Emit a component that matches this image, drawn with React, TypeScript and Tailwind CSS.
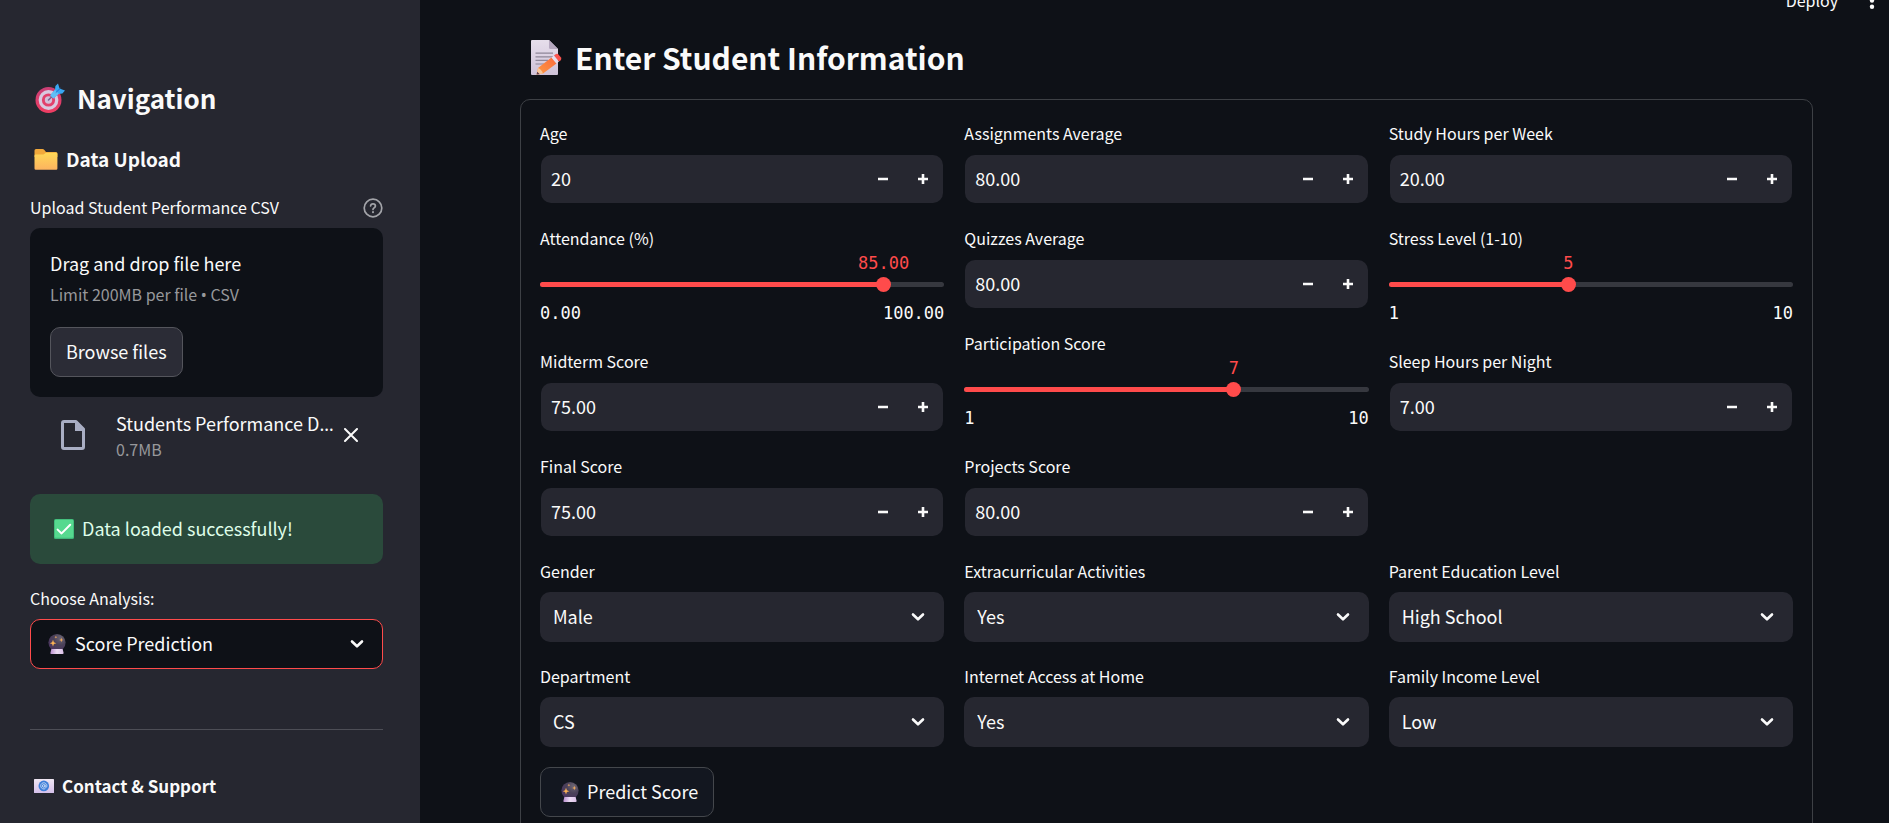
import { useId, useState } from "react";
import type { ReactNode } from "react";

function TargetEmoji({ className }: { className: string }) {
  return (
    <svg viewBox="0 0 30 30" className={className} aria-hidden="true">
      <defs>
        <linearGradient id="tg" x1="0" y1="0" x2="0" y2="1">
          <stop offset="0" stopColor="#c93f76" />
          <stop offset="1" stopColor="#f03d62" />
        </linearGradient>
      </defs>
      <circle cx="13.5" cy="17" r="13" fill="url(#tg)" />
      <circle cx="13.5" cy="17" r="9.9" fill="#d9c9df" />
      <circle cx="13.5" cy="17" r="6.6" fill="#e2406b" />
      <circle cx="13.5" cy="17" r="3.7" fill="#d3bfd8" />
      <path d="M13.5 17 20 10.5" stroke="#7a6390" strokeWidth="1.6" strokeLinecap="round" />
      <path d="M15.2 12.2 20 6.8 20.4 3 23 .6 24.6 5.6 30 7.6 27.4 10.6 23.6 11 18.4 15.4Z" fill="#38a6f2" />
      <path d="M15.2 12.2 20 6.8 23.8 10.8 18.4 15.4Z" fill="#5fc0f5" />
      <path d="M20.8 9.6 25.4 5.2" stroke="#1f6fd0" strokeWidth="1" />
    </svg>
  );
}

function FolderEmoji({ className }: { className: string }) {
  return (
    <svg viewBox="0 0 24 21" className={className} aria-hidden="true">
      <defs>
        <linearGradient id="fd" x1="0" y1="0" x2="0" y2="1">
          <stop offset="0" stopColor="#ffd857" />
          <stop offset="1" stopColor="#fcb35f" />
        </linearGradient>
      </defs>
      <path d="M.5 1.5Q.5 0 2 0H8.5Q9.6 0 10.4 1L12 3H22Q23.4 3 23.4 4.5V8H.5Z" fill="#f2a93b" />
      <path d="M.5 6.8Q.5 5.6 1.8 5.6H9.5L12 3.8H22.2Q23.4 3.8 23.4 5V19.4Q23.4 20.7 22.2 20.7H1.8Q.5 20.7.5 19.4Z" fill="url(#fd)" />
    </svg>
  );
}

function MemoEmoji({ className }: { className: string }) {
  return (
    <svg viewBox="0 0 31 35" className={className} aria-hidden="true">
      <defs>
        <linearGradient id="mp" x1="0" y1="0" x2="0" y2="1">
          <stop offset="0" stopColor="#e6deeb" />
          <stop offset="1" stopColor="#cfc2d8" />
        </linearGradient>
        <linearGradient id="mc" x1="1" y1="0" x2="0" y2="1">
          <stop offset="0" stopColor="#fb6a3c" />
          <stop offset="1" stopColor="#fb9a44" />
        </linearGradient>
      </defs>
      <path d="M0 1Q0 0 1 0H18L27 9V34Q27 35 26 35H1Q0 35 0 34Z" fill="url(#mp)" />
      <path d="M18 0 27 9H19.5Q18 9 18 7.5Z" fill="#b5a8bf" />
      <path d="M4.5 13.2H22M4.5 16.8H22M4.5 20.4H17M4.5 24H13" stroke="#8e8698" strokeWidth="1.2" />
      <path d="M5.6 34.6 7 28 20.5 17.5 25.5 23.5 12 33.6Z" fill="url(#mc)" />
      <path d="M5.6 34.6 7 28Q10.4 29 12 33.6Z" fill="#f7c79a" />
      <path d="M5.6 34.6 6.2 31.8 8.8 34.2Z" fill="#5d3748" />
      <path d="M20.5 17.5 23 15.6 28 21.6 25.5 23.5Z" fill="#e6dcea" />
      <path d="M23 15.6 25 14.1Q26.4 13.2 27.5 14.5L30 17.6Q30.8 19 29.8 20.2L28 21.6Z" fill="#f9544f" />
    </svg>
  );
}

function CheckEmoji({ className }: { className: string }) {
  return (
    <svg viewBox="0 0 20 20" className={className} aria-hidden="true">
      <rect width="20" height="20" rx="1.6" fill="#3fb779" />
      <rect x=".8" y=".8" width="18.4" height="18" rx="1.2" fill="#56d98f" />
      <path d="M3.6 10.6 7.6 14.4 16.2 5.8" fill="none" stroke="#fff" strokeWidth="2" strokeLinecap="round" strokeLinejoin="round" />
    </svg>
  );
}

function CrystalBallEmoji({ className }: { className: string }) {
  return (
    <svg viewBox="0 0 18 20" className={className} aria-hidden="true">
      <defs>
        <radialGradient id="cb" cx=".7" cy=".25" r=".8">
          <stop offset="0" stopColor="#6c6674" />
          <stop offset=".5" stopColor="#4a4158" />
          <stop offset="1" stopColor="#4b3560" />
        </radialGradient>
        <linearGradient id="cs" x1="0" y1="0" x2="1" y2="0">
          <stop offset="0" stopColor="#b98fd0" />
          <stop offset=".5" stopColor="#ecdcf3" />
          <stop offset="1" stopColor="#d9bfe6" />
        </linearGradient>
      </defs>
      <circle cx="9" cy="8.6" r="8.6" fill="url(#cb)" />
      <path d="M3.4 15H14.6L15.6 19Q15.6 20 14.6 20H3.2Q2.2 20 2.4 19Z" fill="url(#cs)" />
      <path d="M5 5.8 5.9 8.3 8.4 9.2 5.9 10.1 5 12.6 4.1 10.1 1.8 9.2 4.1 8.3Z" fill="#fbb254" />
      <path d="M13.3 3.7 13.9 5.4 15.5 6 13.9 6.6 13.3 8.3 12.7 6.6 11.1 6 12.7 5.4Z" fill="#f5ac5c" />
      <path d="M7.9 1.8 8.3 2.8 9.3 3.2 8.3 3.6 7.9 4.6 7.5 3.6 6.5 3.2 7.5 2.8Z" fill="#f5ac5c" />
    </svg>
  );
}

function EmailEmoji({ className }: { className: string }) {
  return (
    <svg viewBox="0 0 20 14" className={className} aria-hidden="true">
      <defs>
        <linearGradient id="em" x1="0" y1="0" x2="0" y2="1">
          <stop offset="0" stopColor="#efe6f2" />
          <stop offset="1" stopColor="#d5c0ea" />
        </linearGradient>
      </defs>
      <rect width="20" height="14" rx=".6" fill="url(#em)" />
      <circle cx="9.8" cy="6.9" r="5.3" fill="#3f7fd9" />
      <circle cx="9.7" cy="6.9" r="1.3" fill="none" stroke="#d7e4f8" strokeWidth=".9" />
      <path d="M11.1 5.5V7.5Q11.2 8.6 12.1 8.4 13 8 12.9 6.8A3.1 3.1 0 1 0 11.3 9.6" fill="none" stroke="#d7e4f8" strokeWidth=".8" />
    </svg>
  );
}

function Chevron() {
  return (
    <svg
      viewBox="0 0 14 9"
      className="pointer-events-none absolute top-1/2 right-[19px] h-[9px] w-[14px] -translate-y-1/2"
      aria-hidden="true"
    >
      <path d="M2 2 7 6.8 12 2" fill="none" stroke="#fafafa" strokeWidth="2.6" strokeLinecap="round" strokeLinejoin="round" />
    </svg>
  );
}

const labelClass = "flex h-[30px] items-center pb-0.5 text-base leading-6 mb-[5px]";

function NumberField({ label, initial, decimals = 2 }: { label: string; initial: number; decimals?: number }) {
  const id = useId();
  const [value, setValue] = useState(initial.toFixed(decimals));
  const step = (delta: number) => setValue((v) => (Number(v) + delta).toFixed(decimals));
  return (
    <div>
      <label htmlFor={id} className={labelClass}>
        {label}
      </label>
      <div className="p-px">
        <div className="flex h-12 overflow-hidden rounded-[10px] bg-[#262730]">
          <input
            id={id}
            type="number"
            value={value}
            onChange={(e) => setValue(e.target.value)}
            className="min-w-0 flex-1 bg-transparent pb-0.5 pl-[10px] text-lg leading-6 outline-none [appearance:textfield] [&::-webkit-inner-spin-button]:appearance-none"
          />
          <button type="button" aria-label={`Decrease ${label}`} onClick={() => step(-1)} className="flex w-10 items-center justify-center">
            <svg viewBox="0 0 10 10" className="size-[10px]" aria-hidden="true">
              <path d="M0 5H10" stroke="#fafafa" strokeWidth="2.6" />
            </svg>
          </button>
          <button type="button" aria-label={`Increase ${label}`} onClick={() => step(1)} className="flex w-10 items-center justify-center">
            <svg viewBox="0 0 10 10" className="size-[10px]" aria-hidden="true">
              <path d="M0 5H10M5 0V10" stroke="#fafafa" strokeWidth="2.6" />
            </svg>
          </button>
        </div>
      </div>
    </div>
  );
}

function SliderField({
  label,
  min,
  max,
  initial,
  decimals = 0,
}: {
  label: string;
  min: number;
  max: number;
  initial: number;
  decimals?: number;
}) {
  const id = useId();
  const [value, setValue] = useState(initial);
  const percent = ((value - min) / (max - min)) * 100;
  return (
    <div>
      <label htmlFor={id} className={labelClass}>
        {label}
      </label>
      <div className="flex h-[68px] flex-col">
        <div className="relative mt-[15px] h-5">
          <div className="absolute inset-x-0 top-[8px] h-[5px] overflow-hidden rounded-full bg-[#36383f]">
            <div className="h-full bg-[#ff4b4b]" style={{ width: `${percent}%` }} />
          </div>
          <input
            id={id}
            type="range"
            min={min}
            max={max}
            value={value}
            onChange={(e) => setValue(Number(e.target.value))}
            className="absolute -left-[7px] top-0 h-5 w-[calc(100%+14px)] appearance-none bg-transparent outline-none [&::-webkit-slider-thumb]:size-[15px] [&::-webkit-slider-thumb]:appearance-none [&::-webkit-slider-thumb]:rounded-full [&::-webkit-slider-thumb]:bg-[#ff4b4b]"
          />
          <output
            htmlFor={id}
            className="absolute -top-[23px] -translate-x-1/2 font-['DejaVu_Sans_Mono',monospace] text-[17px] leading-6 text-[#ff4b4b]"
            style={{ left: `${percent}%` }}
          >
            {value.toFixed(decimals)}
          </output>
        </div>
        <div className="mt-[7px] flex justify-between font-['DejaVu_Sans_Mono',monospace] text-[17px] leading-6">
          <span>{min.toFixed(decimals)}</span>
          <span>{max.toFixed(decimals)}</span>
        </div>
      </div>
    </div>
  );
}

function SelectField({ label, options }: { label: string; options: string[] }) {
  const id = useId();
  return (
    <div>
      <label htmlFor={id} className={labelClass}>
        {label}
      </label>
      <div className="relative">
        <select id={id} className="h-[50px] w-full appearance-none rounded-[10px] bg-[#262730] px-[13px] pb-0.5 text-lg leading-6 outline-none">
          {options.map((o) => (
            <option key={o}>{o}</option>
          ))}
        </select>
        <Chevron />
      </div>
    </div>
  );
}

function Column({ children }: { children: ReactNode }) {
  return <div className="flex min-w-0 flex-1 flex-col gap-5">{children}</div>;
}

function Sidebar() {
  return (
    <aside className="flex w-[420px] shrink-0 flex-col overflow-hidden bg-[#262730] pr-[37px] pl-[30px]">
      <h2 className="mt-[74px] flex h-12 items-center text-[26px] leading-9 font-bold">
        <TargetEmoji className="mr-3 ml-[5px] size-[30px]" />
        Navigation
      </h2>
      <h3 className="mt-[23px] flex h-7 items-center text-[19px] leading-7 font-bold">
        <FolderEmoji className="mr-2 ml-1 h-[21px] w-6" />
        Data Upload
      </h3>

      <div className="mt-5 flex h-[30px] items-center justify-between">
        <label htmlFor="csv" className="pb-0.5 text-base leading-6">
          Upload Student Performance CSV
        </label>
        <button type="button" aria-label="Help">
          <svg viewBox="0 0 20 20" className="size-5" fill="none" stroke="#a3a4a9" strokeWidth="1.7" strokeLinecap="round" aria-hidden="true">
            <circle cx="10" cy="10" r="8.8" />
            <path d="M7.6 8Q7.7 5.8 10 5.8 12.4 5.8 12.4 8 12.4 9.2 11 9.9 10 10.4 10 11.4" />
            <path d="M10 14.1V14.2" strokeWidth="2" />
          </svg>
        </button>
      </div>
      <section className="mt-[5px] rounded-[10px] bg-[#0e1117] p-5">
        <input id="csv" type="file" accept=".csv" className="sr-only" />
        <p className="text-lg leading-[30px]">Drag and drop file here</p>
        <p className="text-base leading-8 text-[#97989b]">
          Limit 200MB per file <span className="font-['Noto_Sans',sans-serif] leading-none">•</span> CSV
        </p>
        <button type="button" className="mt-[17px] h-[50px] rounded-[10px] border border-[#54555c] bg-[#2b2c36] px-[15px] pb-0.5 text-lg leading-6">
          Browse files
        </button>
      </section>

      <div className="mt-3 flex items-center">
        <svg viewBox="0 0 24 30" className="ml-[31px] h-[30px] w-6 shrink-0" aria-hidden="true">
          <path d="M3 1.5H15L22.5 9V27Q22.5 28.5 21 28.5H3Q1.5 28.5 1.5 27V3Q1.5 1.5 3 1.5Z" fill="none" stroke="#a9aec4" strokeWidth="3" strokeLinejoin="round" />
          <path d="M14 1V11H23Z" fill="#a9aec4" />
        </svg>
        <div className="ml-[31px] w-[222px]">
          <p className="text-lg leading-7 whitespace-nowrap">
            Students Performance D<span className="font-['Noto_Sans',sans-serif] leading-none">…</span>
          </p>
          <p className="text-base leading-6 text-[#97989b]">0.7MB</p>
        </div>
        <button type="button" aria-label="Remove file" className="ml-[6px] shrink-0">
          <svg viewBox="0 0 14 14" className="size-[14px]" aria-hidden="true">
            <path d="M1 1 13 13M13 1 1 13" stroke="#fafafa" strokeWidth="2" strokeLinecap="round" />
          </svg>
        </button>
      </div>

      <div role="status" className="mt-[33px] flex h-[70px] items-center rounded-[10px] bg-[#2a4a3b] px-6 text-lg leading-7 text-[#dffde9]">
        <CheckEmoji className="mr-2 size-5" />
        <span className="pb-0.5">Data loaded successfully!</span>
      </div>

      <label htmlFor="analysis" className="mt-5 mb-[5px] flex h-[30px] items-center pb-0.5 text-base leading-6">
        Choose Analysis:
      </label>
      <div className="relative">
        <select
          id="analysis"
          className="h-[50px] w-full appearance-none rounded-[10px] border border-[#ff4b4b] bg-[#0e1117] px-11 pb-0.5 text-lg leading-6 outline-none"
        >
          <option>Score Prediction</option>
        </select>
        <CrystalBallEmoji className="pointer-events-none absolute top-[15px] left-[18px] h-5 w-[18px]" />
        <Chevron />
      </div>

      <hr className="mt-[60px] border-[#4d4e56]" />
      <h4 className="mt-[42px] flex h-7 items-center text-[17px] leading-7 font-bold">
        <EmailEmoji className="mr-2 ml-1 h-[14px] w-5" />
        Contact &amp; Support
      </h4>
    </aside>
  );
}

export default function App() {
  return (
    <div className="flex h-screen overflow-hidden bg-[#0e1117] font-['Noto_Sans_CJK_SC',sans-serif] text-[#fafafa]">
      <Sidebar />
      <main className="min-w-0 flex-1 overflow-y-auto [scrollbar-width:none]">
        <header className="-mt-3 flex h-6 items-center justify-end pr-[14px]">
          <button type="button" className="mr-[31px] text-base leading-6">
            Deploy
          </button>
          <button type="button" aria-label="Menu">
            <svg viewBox="0 0 6 20" className="h-5 w-[6px]" fill="#fafafa" aria-hidden="true">
              <circle cx="3" cy="4.5" r="2.2" />
              <circle cx="3" cy="10.5" r="2.2" />
              <circle cx="3" cy="16.7" r="2.2" />
            </svg>
          </button>
        </header>
        <div className="pr-[76px] pb-24 pl-[100px]">
          <h1 className="mt-[21px] flex h-12 items-center text-[30px] leading-[48px] font-bold">
            <MemoEmoji className="mr-[13px] ml-[11px] h-[35px] w-[31px]" />
            Enter Student Information
          </h1>
          <form className="mt-[18px] flex flex-col gap-5 rounded-[10px] border border-[#3d4045] p-[19px]" onSubmit={(e) => e.preventDefault()}>
            <div className="flex gap-5">
              <Column>
                <NumberField label="Age" initial={20} decimals={0} />
                <SliderField label="Attendance (%)" min={0} max={100} initial={85} decimals={2} />
                <NumberField label="Midterm Score" initial={75} />
                <NumberField label="Final Score" initial={75} />
              </Column>
              <Column>
                <NumberField label="Assignments Average" initial={80} />
                <NumberField label="Quizzes Average" initial={80} />
                <SliderField label="Participation Score" min={1} max={10} initial={7} />
                <NumberField label="Projects Score" initial={80} />
              </Column>
              <Column>
                <NumberField label="Study Hours per Week" initial={20} />
                <SliderField label="Stress Level (1-10)" min={1} max={10} initial={5} />
                <NumberField label="Sleep Hours per Night" initial={7} />
              </Column>
            </div>
            <div className="flex gap-5">
              <Column>
                <SelectField label="Gender" options={["Male", "Female"]} />
                <SelectField label="Department" options={["CS", "Engineering", "Business", "Mathematics"]} />
              </Column>
              <Column>
                <SelectField label="Extracurricular Activities" options={["Yes", "No"]} />
                <SelectField label="Internet Access at Home" options={["Yes", "No"]} />
              </Column>
              <Column>
                <SelectField label="Parent Education Level" options={["High School", "Bachelor's", "Master's", "PhD"]} />
                <SelectField label="Family Income Level" options={["Low", "Medium", "High"]} />
              </Column>
            </div>
            <button type="submit" className="flex h-[50px] items-center self-start rounded-[10px] border border-[#44474c] bg-[#131720] pr-[15px] pl-5 text-lg leading-6">
              <CrystalBallEmoji className="mr-2 h-5 w-[18px]" />
              <span className="pb-0.5">Predict Score</span>
            </button>
          </form>
        </div>
      </main>
    </div>
  );
}
